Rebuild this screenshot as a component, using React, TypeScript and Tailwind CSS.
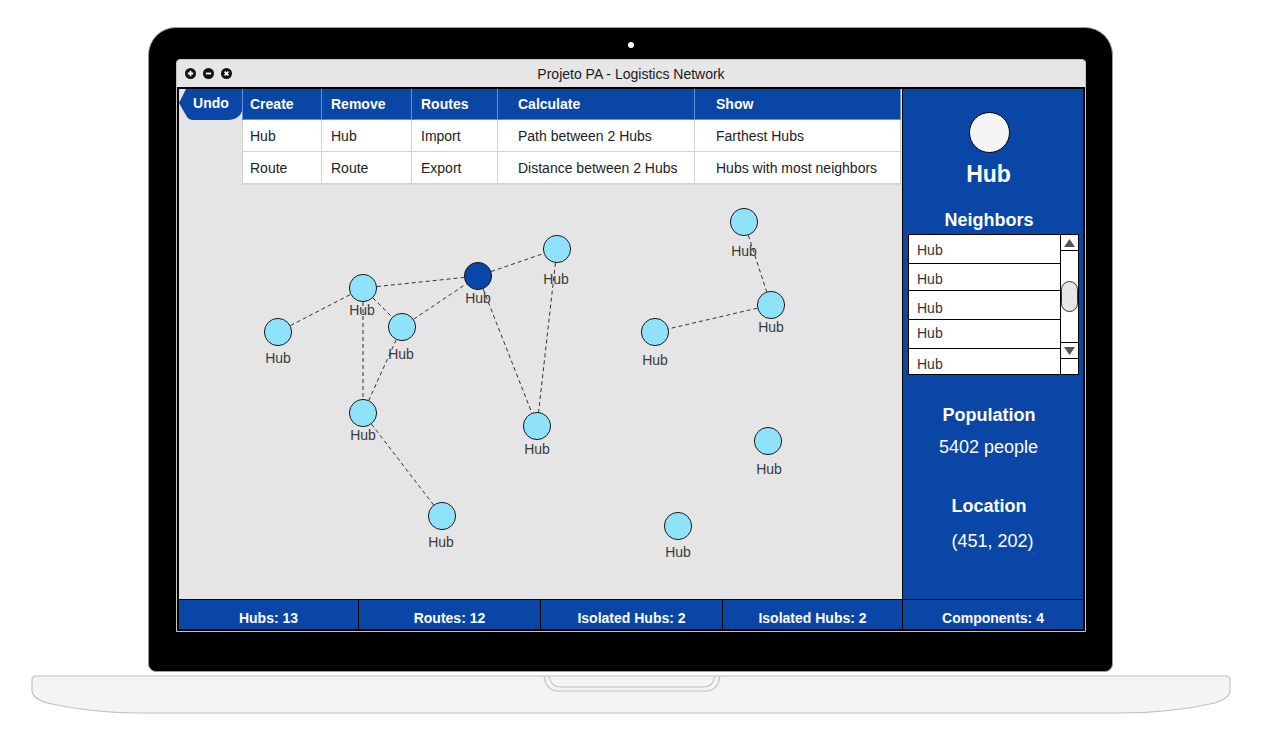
import React from "react"

type Hub = { x: number; y: number; lx: number; ly: number; active?: boolean }

const hubs: Hub[] = [
  { x: 278, y: 332, lx: 278, ly: 358 },
  { x: 363, y: 288, lx: 362, ly: 310 },
  { x: 402, y: 327, lx: 401, ly: 354 },
  { x: 478, y: 276, lx: 478, ly: 298, active: true },
  { x: 557, y: 249, lx: 556, ly: 279 },
  { x: 363, y: 413, lx: 363, ly: 435 },
  { x: 537, y: 426, lx: 537, ly: 449 },
  { x: 442, y: 516, lx: 441, ly: 542 },
  { x: 744, y: 222, lx: 744, ly: 251 },
  { x: 771, y: 305, lx: 771, ly: 327 },
  { x: 655, y: 332, lx: 655, ly: 360 },
  { x: 768, y: 441, lx: 769, ly: 469 },
  { x: 678, y: 526, lx: 678, ly: 552 },
]

const routes: [number, number][] = [
  [0, 1], [1, 3], [3, 4], [1, 2], [2, 3], [1, 5],
  [2, 5], [3, 6], [4, 6], [5, 7], [8, 9], [9, 10],
]

const menu = [
  { title: "Create", items: ["Hub", "Route"], pad: "pl-[7px]" },
  { title: "Remove", items: ["Hub", "Route"], pad: "pl-[9px]" },
  { title: "Routes", items: ["Import", "Export"], pad: "pl-[9px]" },
  { title: "Calculate", items: ["Path between 2 Hubs", "Distance between 2 Hubs"], pad: "pl-[20px]" },
  { title: "Show", items: ["Farthest Hubs", "Hubs with most neighbors"], pad: "pl-[21px]" },
]

// row height, text offset
const neighborRows: [string, string][] = [
  ["h-[29px]", "pt-[8px]"],
  ["h-[27px]", "pt-[8px]"],
  ["h-[29px]", "pt-[10px]"],
  ["h-[29px]", "pt-[6px]"],
]

const stats = ["Hubs: 13", "Routes: 12", "Isolated Hubs: 2", "Isolated Hubs: 2", "Components: 4"]

function WindowButtons() {
  return (
    <div className="flex gap-[7px] pl-[8px]">
      <svg width="11" height="11" viewBox="0 0 11 11">
        <circle cx="5.5" cy="5.5" r="5.5" fill="#111" />
        <path d="M2.8 5.5H8.2M5.5 2.8V8.2" stroke="#fff" strokeWidth="1.8" />
      </svg>
      <svg width="11" height="11" viewBox="0 0 11 11">
        <circle cx="5.5" cy="5.5" r="5.5" fill="#111" />
        <path d="M2.8 5.5H8.2" stroke="#fff" strokeWidth="1.8" />
      </svg>
      <svg width="11" height="11" viewBox="0 0 11 11">
        <circle cx="5.5" cy="5.5" r="5.5" fill="#111" />
        <path d="M3.6 3.6L7.4 7.4M7.4 3.6L3.6 7.4" stroke="#fff" strokeWidth="1.7" />
      </svg>
    </div>
  )
}

function Menu() {
  return (
    <div className="relative flex">
      <div className="relative h-[31px] w-[63px]">
        <svg className="absolute inset-0" width="64" height="31" viewBox="0 0 64 31">
          <path d="M7 0 H64 V31 H56 H13 Q10 31 8 28 L0 14 Z" fill="#0946a5" />
          <path d="M48 31 Q64 31 64 15 V31 Z" fill="#e5e5e5" />
        </svg>
        <div className="relative pt-[7px] pl-[1px] text-center text-[14px] font-bold leading-none text-white">Undo</div>
      </div>
      <div className="relative grid grid-cols-[80px_90px_86px_197px_206px] shadow-[0_1px_0_#d6d6d6]">
        {menu.map((col, i) => (
          <div
            key={col.title}
            className={`flex h-[31px] items-center border-r border-b border-[#5b93d8] bg-[#0946a5] text-[14px] font-bold leading-none text-white ${col.pad} ${i === 0 ? "border-l" : ""}`}
          >
            {col.title}
          </div>
        ))}
        {[0, 1].map((row) =>
          menu.map((col, i) => (
            <div
              key={col.title + row}
              className={`flex h-[32px] items-center border-r border-b border-[#d2d2d2] bg-white text-[14px] leading-none text-[#222] ${col.pad} ${i === 0 ? "border-l" : ""}`}
            >
              {col.items[row]}
            </div>
          ))
        )}
      </div>
    </div>
  )
}

function Graph() {
  return (
    <svg className="absolute inset-0" width="723" height="511" viewBox="179 89 723 511">
      {routes.map(([a, b], i) => (
        <line
          key={i}
          x1={hubs[a].x}
          y1={hubs[a].y}
          x2={hubs[b].x}
          y2={hubs[b].y}
          stroke="#333"
          strokeWidth="1"
          strokeDasharray="4 3"
        />
      ))}
      {hubs.map((h, i) => (
        <circle key={i} cx={h.x} cy={h.y} r="13.6" fill={h.active ? "#0946a5" : "#90e2fa"} stroke="#1a1a1a" strokeWidth="1" />
      ))}
      {hubs.map((h, i) => (
        <text
          key={i}
          x={h.lx}
          y={h.ly + 5}
          textAnchor="middle"
          fontSize="14"
          fill="#3a3a3a"
          fontFamily="'Liberation Sans', Arial, sans-serif"
        >
          Hub
        </text>
      ))}
    </svg>
  )
}

function Neighbors() {
  return (
    <div className="ml-[5px] mt-[5px] flex h-[141px] w-[171px] border border-black bg-white">
      <div className="flex w-[151px] flex-col">
        {neighborRows.map(([h, pt], i) => (
          <div key={i} className={`${h} ${pt} border-b border-black pl-[8px] text-[14px] leading-none text-[#333]`}>
            Hub
          </div>
        ))}
        <div className="flex-1 pt-[8px] pl-[8px] text-[14px] leading-none text-[#333]">Hub</div>
      </div>
      <div className="flex w-[18px] flex-col border-l border-black">
        <div className="flex h-[16px] items-center justify-center border-b border-black">
          <svg width="11" height="8" viewBox="0 0 11 8">
            <path d="M5.5 0L11 8H0Z" fill="#555" />
          </svg>
        </div>
        <div className="mt-[30px] h-[31px] rounded-full border border-[#333] bg-[#e6e6e6]" />
        <div className="mt-[30px] flex h-[17px] items-center justify-center border-y border-black">
          <svg width="11" height="8" viewBox="0 0 11 8">
            <path d="M0 0H11L5.5 8Z" fill="#555" />
          </svg>
        </div>
      </div>
    </div>
  )
}

function Sidebar() {
  return (
    <div className="flex w-[181px] flex-col border-l border-black bg-[#0946a5] text-white">
      <div className="mt-[23px] flex justify-center pr-[8px]">
        <div className="h-[41px] w-[41px] rounded-full border border-black bg-[#f4f4f4]" />
      </div>
      <div className="mt-[10px] pr-[9px] text-center text-[23px] font-bold leading-none">Hub</div>
      <div className="mt-[25px] pr-[8px] text-center text-[18px] font-bold leading-none">Neighbors</div>
      <Neighbors />
      <div className="mt-[31px] pr-[8px] text-center text-[18px] font-bold leading-none">Population</div>
      <div className="mt-[14px] pr-[9px] text-center text-[18px] leading-none">5402 people</div>
      <div className="mt-[41px] pr-[8px] text-center text-[18px] font-bold leading-none">Location</div>
      <div className="mt-[17px] pr-[1px] text-center text-[18px] leading-none">(451, 202)</div>
    </div>
  )
}

function AppWindow() {
  return (
    <div className="ml-[27px] mt-[11px] flex h-[573px] w-[910px] flex-col rounded-t-[4px] border border-[#c4c4c4] bg-[#e6e6e6]">
      <div className="relative flex h-[27px] items-center">
        <WindowButtons />
        <div className="absolute inset-x-0 text-center text-[14px] leading-none text-[#1a1a1a]">
          Projeto PA - Logistics Network
        </div>
      </div>
      <div className="flex flex-1 flex-col border-2 border-black">
        <div className="flex flex-1">
          <div className="relative flex-1 bg-[#e5e5e5]">
            <Graph />
            <Menu />
          </div>
          <Sidebar />
        </div>
        <div className="grid h-[30px] grid-cols-[180px_182px_182px_180px_1fr] border-t border-black bg-[#0946a5]">
          {stats.map((s, i) => (
            <div
              key={i}
              className={`pt-[11px] text-center text-[14px] font-bold leading-none text-white ${i < 4 ? "border-r border-black" : ""}`}
            >
              {s}
            </div>
          ))}
        </div>
      </div>
    </div>
  )
}

function LaptopBase() {
  return (
    <svg className="ml-[31px] mt-[3px] block" width="1200" height="39" viewBox="0 0 1200 39">
      <path
        d="M5 1 H1195 Q1199 1 1199 5 V16 Q1199 23 1184 28 Q1140 38 1090 38 H110 Q60 38 16 28 Q1 23 1 16 V5 Q1 1 5 1 Z"
        fill="#f4f4f4"
        stroke="#c2c2c2"
        strokeWidth="1.2"
      />
      <path d="M513 1 Q515 15 526 16 H676 Q687 15 689 1" fill="none" stroke="#c2c2c2" strokeWidth="1.2" />
      <path d="M518 1 Q520 12 529 12 H673 Q682 12 684 1" fill="none" stroke="#c2c2c2" strokeWidth="1.2" />
    </svg>
  )
}

export default function App() {
  return (
    <div className="h-[738px] w-[1261px] overflow-hidden bg-white pt-[27px] font-['Liberation_Sans',Arial,sans-serif]">
      <div className="ml-[148px] h-[645px] w-[965px] rounded-t-[28px] rounded-b-[8px] border border-[#9c9c9c] bg-black pt-[14px]">
        <div className="mx-auto h-[6px] w-[6px] rounded-full bg-white" />
        <AppWindow />
      </div>
      <LaptopBase />
    </div>
  )
}
